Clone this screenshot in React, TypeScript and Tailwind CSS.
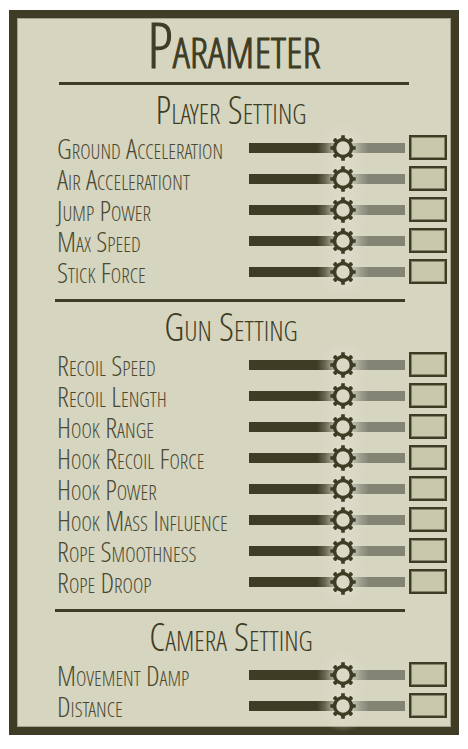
import { useId, useState } from "react";

type Section = { title: string; rows: string[] };

const sections: Section[] = [
  {
    title: "Player Setting",
    rows: ["Ground Acceleration", "Air Accelerationt", "Jump Power", "Max Speed", "Stick Force"],
  },
  {
    title: "Gun Setting",
    rows: [
      "Recoil Speed",
      "Recoil Length",
      "Hook Range",
      "Hook Recoil Force",
      "Hook Power",
      "Hook Mass Influence",
      "Rope Smoothness",
      "Rope Droop",
    ],
  },
  { title: "Camera Setting", rows: ["Movement Damp", "Distance"] },
];

const teeth = [0, 45, 90, 135, 180, 225, 270, 315];

function Gear() {
  return (
    <svg viewBox="-13 -13 26 26" className="size-[26px]" aria-hidden="true">
      <circle r="8.4" fill="#dad9c6" stroke="#3e3c24" strokeWidth="3.4" />
      {teeth.map((angle) => (
        <path
          key={angle}
          d={
            angle % 90 === 0
              ? "M-3.2 -9L-1.8 -10.5V-12.7H1.8V-10.5L3.2 -9Z"
              : "M-1.6 -9L-2.1 -11.6Q-2 -12.9 0 -12.9Q2 -12.9 2.1 -11.6L1.6 -9Z"
          }
          fill="#3e3c24"
          transform={`rotate(${angle})`}
        />
      ))}
    </svg>
  );
}

function ParameterRow({ label }: { label: string }) {
  const id = useId();
  const [value, setValue] = useState(60);
  const [text, setText] = useState("");
  return (
    <div className="grid h-[31px] grid-cols-[minmax(0,1fr)_156px_38px] items-center gap-1">
      <label htmlFor={id} className="text-[28px] leading-[28px] whitespace-nowrap text-[#4a4830]">
        {label}
      </label>
      <div className="relative h-[10px] bg-[#848475]">
        <div className="h-full bg-[#3e3c24]" style={{ width: `${value}%` }} />
        <div
          className="pointer-events-none absolute top-1/2 size-[52px] -translate-x-1/2 -translate-y-1/2 bg-[radial-gradient(closest-side,#dfdecd_0%,#dfdecdaa_40%,#dfdecd44_70%,#dfdecd00_100%)]"
          style={{ left: `${value}%` }}
        />
        <div
          className="pointer-events-none absolute top-1/2 z-10 -translate-x-1/2 -translate-y-1/2"
          style={{ left: `${value}%` }}
        >
          <Gear />
        </div>
        <input
          id={id}
          type="range"
          min={0}
          max={100}
          value={value}
          onChange={(event) => setValue(Number(event.target.value))}
          className="absolute inset-x-0 -top-2 z-20 h-[26px] w-full cursor-pointer opacity-0"
        />
      </div>
      <input
        type="text"
        aria-label={`${label} value`}
        value={text}
        onChange={(event) => setText(event.target.value)}
        className="h-[25px] w-full border-2 border-[#3e3c24] bg-[#c8c8ad] px-1 text-[14px] shadow-[inset_0_0_0_1px_#85846a] outline-none"
      />
    </div>
  );
}

export default function App() {
  return (
    <main className="px-[9px] pt-[10px] font-['Open_Sans_Condensed_Light','Roboto_Condensed',sans-serif] text-[#3e3c24] [font-variant-caps:small-caps]">
      <div className="border-8 border-[#3e3c24] bg-[#d6d5c0] pr-1 pb-[6px] pl-10 shadow-[inset_0_0_0_1px_#a3a28a]">
        <h1 className="mr-[38px] ml-[2px] h-[67px] border-b-[3px] border-[#3e3c24] text-center text-[62px] leading-[52px] [-webkit-text-stroke:1px_#3e3c24]">
          Parameter
        </h1>
        {sections.map((section, index) => (
          <section key={section.title}>
            {index > 0 && <hr className="mt-3 mr-[42px] -ml-[2px] border-t-[3px] border-[#3e3c24]" />}
            <h2 className="mr-[42px] h-[47px] text-center text-[38px] leading-[48px]">{section.title}</h2>
            {section.rows.map((row) => (
              <ParameterRow key={row} label={row} />
            ))}
          </section>
        ))}
      </div>
    </main>
  );
}
